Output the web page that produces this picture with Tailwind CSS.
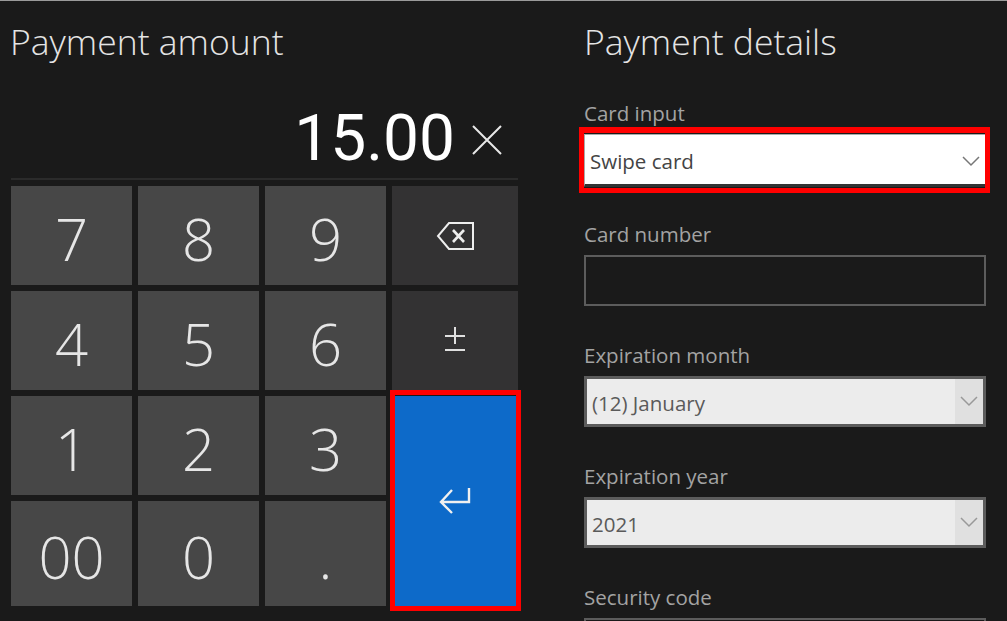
<!DOCTYPE html>
<html><head><meta charset="utf-8"><script src="https://cdn.jsdelivr.net/npm/@tailwindcss/browser@4"></script></head>
<body class="m-0 bg-[#1a1a1a]">
<div class="w-[1007px] h-[621px] overflow-hidden bg-[#1a1a1a] border-t border-[#9a9a9a] flex font-['Open_Sans',sans-serif]">
  <div class="w-[584px] shrink-0 pl-[11px] flex flex-col">
    <div class="h-[83px] text-[35.5px] leading-[81px] font-light text-[#e4e4e4] -ml-[1px]">Payment amount</div>
    <div class="w-[507px] h-[96px] flex items-center justify-end border-b-2 border-[#2b2b2b] pt-[16px]">
      <span class="text-[64px] leading-none text-white font-['Roboto',sans-serif] mr-[17px]">15.00</span>
      <svg class="mr-[16px] mt-[2px]" width="30" height="30" viewBox="0 0 30 30" fill="none" stroke="#e8e8e8" stroke-width="2"><path d="M1 1 L29 29 M29 1 L1 29"/></svg>
    </div>
    <div class="grid grid-cols-[121px_121px_121px_126px] grid-rows-[99px_99px_99px_105px] gap-[6px] w-[507px] mt-[6px] text-[58px] font-light text-[#e6e6e6]">
      <div class="bg-[#474747] flex items-center justify-center pt-[5px]">7</div>
      <div class="bg-[#474747] flex items-center justify-center pt-[5px]">8</div>
      <div class="bg-[#474747] flex items-center justify-center pt-[5px]">9</div>
      <div class="bg-[#333233] flex items-center justify-center">
        <svg width="38" height="28" viewBox="0 0 38 28" fill="none" stroke="#eeeeee" stroke-width="2"><path d="M37 1 V27 H13 L2 14 L13 1 Z"/><path d="M17 8 L28 20 M28 8 L17 20" stroke-width="2.6"/></svg>
      </div>
      <div class="bg-[#474747] flex items-center justify-center pt-[5px]">4</div>
      <div class="bg-[#474747] flex items-center justify-center pt-[5px]">5</div>
      <div class="bg-[#474747] flex items-center justify-center pt-[5px]">6</div>
      <div class="bg-[#333233] flex items-center justify-center pb-[2px]">
        <svg width="22" height="25" viewBox="0 0 22 25" fill="none" stroke="#e0e0e0" stroke-width="2"><path d="M11 0 V17 M1 9 H21 M1 23 H21"/></svg>
      </div>
      <div class="bg-[#474747] flex items-center justify-center pt-[5px]">1</div>
      <div class="bg-[#474747] flex items-center justify-center pt-[5px]">2</div>
      <div class="bg-[#474747] flex items-center justify-center pt-[5px]">3</div>
      <div class="row-span-2 relative bg-[#0d6ac9] flex items-center justify-center">
        <svg width="32" height="26" viewBox="0 0 32 26" fill="none" stroke="#f0f0f0" stroke-width="2.4"><path d="M30 0 V14 H3 M13 2 L2 14 L13 25"/></svg>
        <div class="absolute -left-[2px] -right-[3px] -top-[6px] -bottom-[5px] border-[5px] border-[#ff0000]"></div>
      </div>
      <div class="bg-[#474747] flex items-center justify-center pt-[5px]">00</div>
      <div class="bg-[#474747] flex items-center justify-center pt-[5px]">0</div>
      <div class="bg-[#474747] flex items-center justify-center pt-[5px]">.</div>
    </div>
  </div>
  <div class="w-[402px] shrink-0 flex flex-col">
    <div class="h-[83px] text-[35.5px] leading-[81px] font-light text-[#e4e4e4]">Payment details</div>
    <div class="flex flex-col gap-[37px] mt-[19px] text-[#a3a3a3] text-[20.5px]">
      <div class="flex flex-col">
        <div class="h-[24px] leading-[24px] mb-[9px]">Card input</div>
        <div class="relative h-[53px] -mb-[2px] bg-white border border-[#aaaaaa] border-b-[3px] border-b-[#333333] flex items-center pl-[5px] pt-[3px] text-[#444444]">Swipe card
          <svg class="absolute right-[5px] top-[21px]" width="18" height="11" viewBox="0 0 18 11" fill="none" stroke="#777777" stroke-width="1.5"><path d="M1 1 L9 9 L17 1"/></svg>
          <div class="absolute -left-[6px] -right-[5px] -top-[8px] -bottom-[9px] border-[5px] border-t-[6px] border-[#ff0000]"></div>
        </div>
      </div>
      <div class="flex flex-col">
        <div class="h-[24px] leading-[24px] mb-[9px]">Card number</div>
        <div class="h-[51px] border-2 border-[#5c5c5c]"></div>
      </div>
      <div class="flex flex-col">
        <div class="h-[24px] leading-[24px] mb-[9px]">Expiration month</div>
        <div class="relative h-[51px] bg-[#ececec] border-[3px] border-[#5c5c5c] flex items-center pl-[5px] pt-[4px] text-[#5a5a5a]">(12) January
          <div class="absolute right-0 top-0 bottom-0 w-[28px] bg-[#e0e0e0] flex items-center justify-center">
            <svg width="18" height="11" viewBox="0 0 18 11" fill="none" stroke="#999999" stroke-width="1.5"><path d="M1 1 L9 9 L17 1"/></svg>
          </div>
        </div>
      </div>
      <div class="flex flex-col">
        <div class="h-[24px] leading-[24px] mb-[9px]">Expiration year</div>
        <div class="relative h-[51px] bg-[#ececec] border-[3px] border-[#5c5c5c] flex items-center pl-[5px] pt-[4px] text-[#5a5a5a]">2021
          <div class="absolute right-0 top-0 bottom-0 w-[28px] bg-[#e0e0e0] flex items-center justify-center">
            <svg width="18" height="11" viewBox="0 0 18 11" fill="none" stroke="#999999" stroke-width="1.5"><path d="M1 1 L9 9 L17 1"/></svg>
          </div>
        </div>
      </div>
      <div class="flex flex-col">
        <div class="h-[24px] leading-[24px] mb-[9px]">Security code</div>
        <div class="h-[51px] border-2 border-[#5c5c5c]"></div>
      </div>
    </div>
  </div>
</div>
</body></html>
